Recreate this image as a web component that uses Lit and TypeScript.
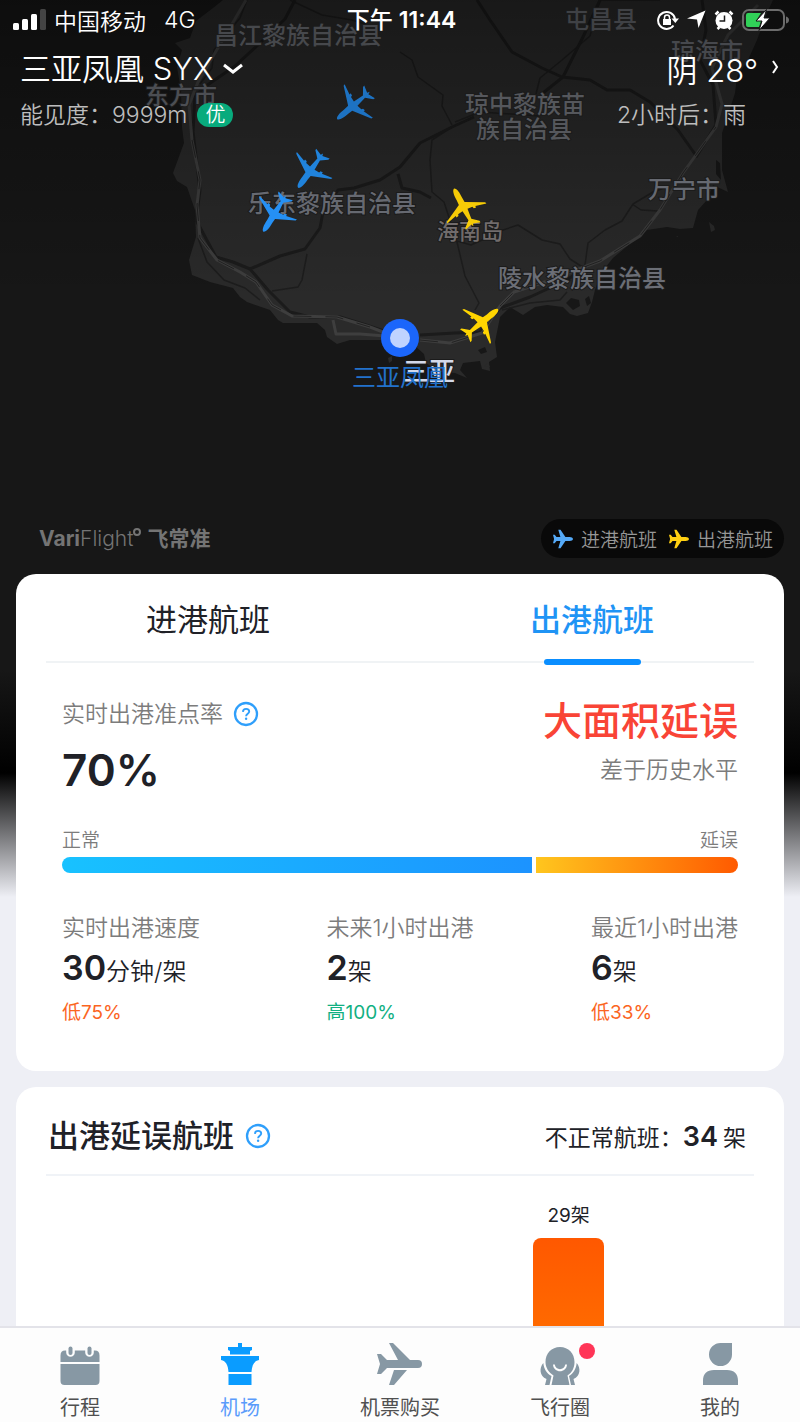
import { LitElement, html, css, svg, nothing } from "lit";
import { customElement, property, state } from "lit/decorators.js";
import { classMap } from "lit/directives/class-map.js";

const PLANE =
  "M22 0C21 2.600 16 3.200 10 3L5 3.200L-4.500 21.500L-6.200 22L-3.400 11L-5 11L-4.600 8.600L-2.800 8L-2.200 2.800L-13 1.600L-18.500 8L-20.300 8.300L-18 1L-20.500 0L-18 -1L-20.300 -8.300L-18.500 -8L-13 -1.600L-2.200 -2.800L-2.800 -8L-4.600 -8.600L-5 -11L-3.400 -11L-6.200 -22L-4.500 -21.500L5 -3.200L10 -3C16 -3.200 21 -2.600 22 0Z";

const MAP_LABELS = [
  { x: 298, y: 44, t: "昌江黎族自治县", c: "#46484c" },
  { x: 601, y: 28, t: "屯昌县", c: "#3f4145" },
  { x: 707, y: 60, t: "琼海市", c: "#46484d" },
  { x: 181, y: 104, t: "东方市", c: "#4c4e53" },
  { x: 525, y: 113, t: "琼中黎族苗", c: "#55575c" },
  { x: 524, y: 138, t: "族自治县", c: "#55575c" },
  { x: 684, y: 198, t: "万宁市", c: "#666971" },
  { x: 332, y: 212, t: "乐东黎族自治县", c: "#666971" },
  { x: 582, y: 287, t: "陵水黎族自治县", c: "#6b6e76" },
];

const PLANES = [
  { x: 354, y: 105, r: 140, c: "#1d72c2" },
  { x: 311, y: 170, r: 126, c: "#2083dc" },
  { x: 275, y: 213, r: 122, c: "#2590f4" },
  { x: 464, y: 208, r: -117, c: "#f6cb06" },
  { x: 481, y: 323, r: -39, c: "#ffd500" },
];

@customElement("airport-map")
class AirportMap extends LitElement {
  static styles = css`
    :host { display: block; min-width: 0; overflow: hidden; }
    .map { display: block; width: 100%; height: 100%; }
    .label { font: 500 24px/1 "Noto Sans CJK SC", sans-serif; text-anchor: middle; paint-order: stroke; stroke: #1b1b1b; stroke-width: 2px; }
    .island { font-size: 22px; fill: #716c6c; }
    .city { font-size: 26px; fill: #d3d9ea; }
    .here { font: 400 24px/1 "Noto Sans CJK SC", sans-serif; text-anchor: middle; fill: #2272cc; }
    .thick { fill: none; stroke: #1b1b1b; stroke-width: 3; stroke-linejoin: round; }
    .thin { fill: none; stroke: #1d1d1d; stroke-width: 1.5; stroke-linejoin: round; }
    .rail { fill: none; stroke: #3e3e3e; stroke-width: 3; stroke-linejoin: round; }
    .dash { fill: none; stroke: #222; stroke-width: 1; stroke-dasharray: 18 14; }
  `;

  render() {
    return html`<svg class="map" viewBox="0 0 800 574" preserveAspectRatio="xMidYMin slice" role="img" aria-label="海南岛航班地图">
      <defs>
        <linearGradient id="shade" x1="0" y1="0" x2="0" y2="1">
          <stop offset="0" stop-color="#000" stop-opacity=".42" />
          <stop offset="1" stop-color="#000" stop-opacity="0" />
        </linearGradient>
      </defs>
      <rect width="800" height="574" fill="#171717" />
      <path fill="#2a2a2a" d="M223 0L213 8L196 21L190 38L175 43L182 50L177 67L181 90L182 127L184 143L173 173L177 181L187 187L195 210L196 237L189 260L192 275L210 282L233 288L240 297L247 302L270 310L278 320L283 323L317 323L325 330L327 337L337 344L350 340L380 340L392 343L415 346L424 354L426 363L440 372L455 373L467 378L460 370L463 363L480 361L482 369L490 371L489 362L497 357L495 342L500 317L510 307L523 315L535 307L547 305L563 307L570 314L577 316L588 313L592 302L595 290L601 273L613 258L632 242L647 230L667 227L680 229L693 228L698 210L707 200L713 185L728 192L722 170L722 133L729 112L735 93L737 77L748 60L757 40L767 13L773 0Z" />
      <path fill="#171717" d="M566 303l5-5 8 2 1 6-7 4zM585 299l4-3 2 7-4 3zM478 350l7-3 2 5-6 2zM716 160l4 3 1 17-5-6z" />
      <path fill="#2a2a2a" d="M709 222l5 4 1 4-4 2zM388 358l4-2 0 5-3 2zM484 366l4-3 2 4zM676 236l2 0 0 1z" />
      <path class="thin" d="M247 0L240 18L226 35L214 50L212 68L200 84M400 52L412 60L418 77L443 95L442 106L452 125M660 0L600 0L590 36L562 60L540 78L536 94M452 127L432 140L430 160L432 192L444 202L457 242L465 276L479 303L475 310M457 241L471 245L482 240L500 231L518 225L542 240L560 244L570 259L584 268M585 265L588 243L605 230L622 221L633 204L653 192L664 188M632 204L641 210L658 211M307 254L302 280L298 287L272 291M198 238L207 262L224 280L245 288L260 300M290 0L322 15L352 20L378 28M567 292L560 300L530 303L502 310M455 122L480 112L540 116" />
      <path class="thick" d="M477 0L490 20L512 52L542 68L562 77L590 80L607 90L630 90L650 102L678 130L697 157M600 0L583 37L563 77L543 93M474 117L452 127L420 143L400 167L380 180L354 188L338 190L323 212L320 228L305 249L280 256L250 269M398 174L402 188L420 192L431 198M295 0L285 19L258 45L235 66L206 86L196 95M702 0L706 30L700 60L713 85L716 125L696 157M195 95L193 132L200 190L196 220L216 257L233 262L250 269L268 290L290 312L310 317L340 317L366 325L390 333M420 335L455 333L480 332L500 308L530 297L567 280L584 268" />
      <path class="rail" d="M246 0L232 24L198 82L189 105L192 140L200 180L197 205L200 238L217 260L240 272L256 282L272 305L292 316L337 317L370 327L383 332M333 320L336 334L360 334L385 336M420 340L450 343L482 333L500 306L514 292L548 281L584 267L600 261L640 236L660 210L683 173L716 127L722 104L712 68L728 35L758 5" />
      <path class="dash" d="M192 140L200 180L197 205L200 238L217 260L240 272L256 282L272 305L292 316L337 317L370 327M420 340L450 343L482 333L500 306L514 292L548 281L584 267L600 261L640 236L660 210L683 173L716 127" />
      <rect width="800" height="300" fill="url(#shade)" />
      ${MAP_LABELS.map((l) => svg`<text class="label" x=${l.x} y=${l.y} fill=${l.c}>${l.t}</text>`)}
      <text class="label island" x="470" y="239">海南岛</text>
      ${PLANES.map(
        (p) => svg`<path d=${PLANE} fill=${p.c} transform="translate(${p.x} ${p.y}) rotate(${p.r})" />`
      )}
      <circle cx="400" cy="338" r="19" fill="#1b66fb" />
      <circle cx="400" cy="338" r="10" fill="#bfd3ff" />
      <text class="label city" x="429" y="381">三亚</text>
      <text class="here" x="400" y="386">三亚凤凰</text>
    </svg>`;
  }
}

@customElement("legend-plane")
class LegendPlane extends LitElement {
  @property() color = "#fff";
  static styles = css`
    :host { display: inline-flex; }
    .icon { width: 22px; height: 22px; }
  `;
  render() {
    return html`<svg class="icon" viewBox="0 0 22 22" aria-hidden="true">
      <path fill=${this.color} d="M21 11c0 1.300-1.600 2-3.300 2h-4.300L8.500 20.300H6.300L8.400 13H4.500L2.700 15.300H1L2.100 11 1 6.700h1.700L4.500 9h3.900L6.300 1.700h2.200L13.400 9h4.300c1.700 0 3.300.7 3.300 2z" />
    </svg>`;
  }
}

@customElement("help-button")
class HelpButton extends LitElement {
  static styles = css`
    :host { display: inline-flex; }
    .btn { display: flex; padding: 0; border: 0; background: none; cursor: pointer; }
    .icon { width: 26px; height: 26px; }
  `;
  render() {
    return html`<button class="btn" aria-label="说明">
      <svg class="icon" viewBox="0 0 26 26" fill="none" stroke="#2f9ffb">
        <circle cx="13" cy="13" r="11" stroke-width="2.300" />
        <path stroke-width="1.900" d="M9.900 10.900c.1-1.900 1.400-3 3.200-3s3.100 1.100 3.100 2.600c0 2.200-3.100 2.300-3.100 4.700" />
        <circle cx="13.100" cy="17.800" r="1.200" fill="#2f9ffb" stroke="none" />
      </svg>
    </button>`;
  }
}

const STATS = [
  { label: "实时出港速度", value: "30", unit: "分钟/架", diff: "低75%", up: false },
  { label: "未来1小时出港", value: "2", unit: "架", diff: "高100%", up: true },
  { label: "最近1小时出港", value: "6", unit: "架", diff: "低33%", up: false },
];

const NAV = [
  {
    label: "行程",
    icon: svg`<path d="M3.500 12.500Q3.500 7.500 8 7.500h1.200v2a4.300 4.300 0 0 0 8.600 0v-2h10.400v2a4.300 4.300 0 0 0 8.600 0v-2H38q4.500 0 4.500 5V19h-39zM3.500 21h39v17q0 4-4 4h-31q-4 0-4-4z"/><rect x="11.500" y="3.500" width="4" height="8.500" rx="2"/><rect x="30.500" y="3.500" width="4" height="8.500" rx="2"/>`,
  },
  {
    label: "机场",
    icon: svg`<path d="M21 0h4v4h10v3l-2 1v3.500H13V8l-2-1V4h10zM4 13h38v4c-5 1-7 5-7.500 12h-23C11 22 9 18 4 17zM11.500 31h23v11h-23z"/>`,
  },
  {
    label: "机票购买",
    icon: svg`<path d="M0 11h4l6 6h11L12 0h4l17 17h8q4 0 4 4t-4 4H10l-6 6H0l3-10zM17 27h13L17 42h-5z"/>`,
  },
  {
    label: "飞行圈",
    icon: svg`<path fill-rule="evenodd" d="M23 4c8.500 0 14.500 6.500 14.500 15 0 6-2.500 10.500-7 13.500l2 9.500H14.500l2-9.500c-4.500-3-8-7.500-8-13.500C8.500 10.500 14.500 4 23 4zM17.800 21.500h-1.800c.4 9 13.600 9 14 0h-1.800c-.6 6.200-9.800 6.200-10.400 0z"/><path d="M6.300 20C2 25 2.500 33 9.500 36L8 42h4.500l2-9C9.500 30.500 7 26 6.300 20zM39.700 20c4.300 5 3.800 13-3.200 16l1.500 6h-4l-2-9c4.500-2.500 7-7 7.700-13z"/>`,
    badge: true,
  },
  {
    label: "我的",
    icon: svg`<path d="M23.500 0H35v11.500A11.500 11.500 0 1 1 23.500 0zM6 42v-4.500C6 31 10 27 17 27h13c7 0 11 4 11 10.500V42z"/>`,
  },
];

@customElement("app-root")
class AppRoot extends LitElement {
  @state() private tab = 1;
  @state() private page = 1;

  static styles = css`
    :host { display: flex; flex-direction: column; height: 100vh; font-family: Inter, "Noto Sans CJK SC", sans-serif; color: #202127; background: #eeeff5; }
    * { box-sizing: border-box; }
    .scroll { flex: 1; min-height: 0; overflow-y: auto; scrollbar-width: none; }
    .content { background: linear-gradient(#171717 0, #171717 670px, #000 773px, #eeeff5 897px); padding-bottom: 16px; }
    button { font: inherit; color: inherit; border: 0; background: none; padding: 0; cursor: pointer; }
    .hero { display: grid; grid-template: 574px / minmax(0, 1fr); }
    .layer { grid-area: 1 / 1; }
    .over { position: relative; display: flex; flex-direction: column; color: #fff; }
    .status { display: grid; grid-template-columns: 1fr auto 1fr; align-items: center; height: 40px; padding: 0 10px 1px 13px; font-size: 23px; font-weight: 350; }
    .carrier, .sysicons { display: flex; align-items: center; }
    .carrier { gap: 8px; }
    .net { margin-left: 10px; }
    .sysicons { justify-content: flex-end; gap: 8px; }
    .time { font-size: 23px; line-height: 32px; font-weight: 500; }
    .time b { font-weight: 600; }
    .info { display: flex; justify-content: space-between; padding: 7px 20px 0; font-weight: 350; }
    .title { display: flex; align-items: center; gap: 10px; font-size: 31px; line-height: 44px; font-weight: 350; }
    .sub { display: flex; align-items: center; gap: 10px; margin-top: 8px; font-size: 23px; line-height: 32px; color: #bdbdbd; }
    .tag { padding: 0 8px; border-radius: 12px; background: #08ab7d; color: #fff; font-size: 20px; line-height: 24px; }
    .weather { display: grid; grid-template-columns: auto auto; column-gap: 14px; justify-items: end; align-content: start; padding-top: 2px; }
    .later { margin: 6px 12px 0 0; }
    .mapfoot { display: flex; justify-content: space-between; align-items: center; margin-top: auto; padding: 0 16px 16px 39px; }
    .logo { display: flex; gap: 6px; align-items: center; color: #747474; font-size: 21px; font-weight: 300; line-height: 28px; }
    .logo b { font-weight: 700; }
    .ring { width: 8px; height: 8px; border: 2px solid #747474; border-radius: 50%; display: inline-block; vertical-align: 10px; }
    .legend { display: flex; align-items: center; gap: 11px; height: 39px; padding: 0 11px; border-radius: 20px; background: #090909; color: #979797; font-size: 19px; font-weight: 350; }
    .key { display: flex; align-items: center; gap: 7px; }
    .cards { display: flex; flex-direction: column; gap: 16px; padding: 0 16px; }
    .card { background: #fff; border-radius: 20px; overflow: hidden; }
    .tabs { display: grid; grid-template-columns: 1fr 1fr; position: relative; }
    .rule { height: 2px; margin: 0 30px; background: #f0f3f5; }
    .tab { display: flex; flex-direction: column; align-items: center; height: 87px; padding-top: 24px; font-size: 31px; line-height: 44px; }
    .tab.on { color: #1f94f5; font-weight: 500; }
    .tabbar { width: 97px; height: 6px; margin: 17px 0 -4px; border-radius: 3px; background: #0a8eff; position: relative; }
    .body { padding: 32px 46px 44px; }
    .summary { display: flex; justify-content: space-between; }
    .muted { color: #7c7c7c; font-size: 23px; line-height: 32px; font-weight: 350; }
    .rate { display: flex; align-items: center; gap: 10px; padding-top: 3px; }
    .percent { margin-top: 12px; font-size: 44px; line-height: 56px; font-weight: 600; }
    .right { text-align: right; }
    .alert { color: #f94436; font-size: 39px; line-height: 52px; font-weight: 500; margin-bottom: 7px; }
    .ends { display: flex; justify-content: space-between; margin-top: 31px; color: #7c7c7c; font-size: 19px; line-height: 24px; font-weight: 350; }
    .meter { display: flex; gap: 4px; height: 16px; margin-top: 4px; border-radius: 8px; overflow: hidden; }
    .ok { background: linear-gradient(90deg, #18c2ff, #1c93ff); }
    .late { background: linear-gradient(90deg, #ffc61e, #ff5a00); }
    .stats { display: grid; grid-template-columns: 1fr 1fr auto; margin-top: 39px; }
    .value { display: flex; align-items: baseline; height: 40px; margin-top: 4px; font-size: 24px; line-height: 40px; font-weight: 350; }
    .value b { font-size: 34px; font-weight: 600; }
    .diff { margin-top: 11px; font-size: 19px; line-height: 28px; color: #fb651f; }
    .diff.up { color: #11b082; }
    .head { display: flex; justify-content: space-between; align-items: center; margin: 0 30px; padding: 27px 8px 16px 2px; border-bottom: 2px solid #f0f3f7; }
    h2 { display: flex; align-items: center; gap: 11px; margin: 0; font-size: 31px; line-height: 44px; font-weight: 500; }
    .total { padding-top: 2px; font-size: 23px; line-height: 32px; }
    .total b { margin-right: 5px; font-size: 27px; font-weight: 600; }
    .chart { display: grid; grid-template-columns: 13fr 71px 4fr; margin: 0 30px; padding-top: 28px; }
    .column { grid-column: 2; display: flex; flex-direction: column; align-items: center; gap: 10px; font-size: 19px; line-height: 24px; }
    .bar { width: 100%; border-radius: 8px 8px 0 0; background: linear-gradient(#ff5800, #ff7a00); }
    .nav { display: grid; grid-template-columns: repeat(5, 1fr); height: 96px; border-top: 2px solid #e3e3e9; background: #fdfdfd; }
    .item { display: flex; flex-direction: column; align-items: center; gap: 9px; padding-top: 15px; color: #505050; font-size: 20px; line-height: 28px; text-decoration: none; }
    .item.on { color: #5a9bfb; }
    .ico { position: relative; display: flex; color: #8798a4; }
    .item.on .ico { color: #0a9cff; }
    .ico svg { width: 46px; height: 42px; fill: currentColor; }
    .dot { position: absolute; top: 0; right: -12px; width: 16px; height: 16px; border-radius: 50%; background: #ff3557; }
  `;

  private statusBar() {
    return html`<div class="status">
      <div class="carrier">
        <svg width="33" height="22" viewBox="0 0 33 22" fill="#fff" aria-hidden="true">
          <rect y="14" width="6" height="7" rx="1.500" /><rect x="9" y="10" width="6" height="11" rx="1.500" />
          <rect x="18" y="5" width="6" height="16" rx="1.500" /><rect x="27" y="0" width="6" height="21" rx="1.500" fill="#444" />
        </svg>
        <span>中国移动</span><span class="net">4G</span>
      </div>
      <span class="time">下午 <b>11:44</b></span>
      <div class="sysicons">
        <svg width="22" height="20" viewBox="0 0 22 20" aria-hidden="true">
          <path fill="none" stroke="#fff" stroke-width="2" d="M16.500 15.500A8.500 8.500 0 1 1 18 9" />
          <path fill="#fff" d="M14.500 8.500H22L18.300 13zM6 9h8v6H6z" />
          <path fill="none" stroke="#fff" stroke-width="1.500" d="M7.500 9.500V7.500a2.500 2.500 0 0 1 5 0v2" />
        </svg>
        <svg width="19" height="19" viewBox="0 0 19 19" fill="#fff" aria-hidden="true"><path d="M18.500.500L11.500 18 10 9.500 0 8.500z" /></svg>
        <svg width="20" height="20" viewBox="0 0 20 20" aria-hidden="true">
          <circle cx="10" cy="10.500" r="8.500" fill="#fff" />
          <path fill="none" stroke="#fff" stroke-width="2.500" d="M1.500 4.500l3-3M18.500 4.500l-3-3M3.500 19l2-2M16.500 19l-2-2" />
          <path fill="none" stroke="#1a1a1a" stroke-width="1.500" d="M10.500 5.500v5.500h-5" />
        </svg>
        <svg width="48" height="24" viewBox="0 0 48 24" aria-hidden="true">
          <rect x="1" y="2" width="41" height="20" rx="6" fill="none" stroke="#6b6b6b" stroke-width="2" />
          <path fill="#6b6b6b" d="M44 8.500q3 1 3 3.500t-3 3.500z" />
          <path fill="#31d158" d="M6 5h13l-5 8h5l-2 6H6q-2 0-2-2V7q0-2 2-2z" />
          <path fill="#fff" stroke="#141414" d="M24.500 1.500L14 13h6l-3 9.500L28 10h-6z" />
        </svg>
      </div>
    </div>`;
  }

  render() {
    return html`
      <div class="scroll">
        <main class="content">
          <section class="hero">
            <airport-map class="layer"></airport-map>
            <div class="layer over">
              ${this.statusBar()}
              <div class="info">
                <div>
                  <button class="title">三亚凤凰 SYX
                    <svg width="20" height="12" viewBox="0 0 20 12" fill="none" stroke="#fff" stroke-width="3" aria-hidden="true"><path d="M1 2l9 7 9-7" /></svg>
                  </button>
                  <div class="sub"><span>能见度：9999m</span><span class="tag">优</span></div>
                </div>
                <div class="weather">
                  <span class="title">阴 28°</span>
                  <svg width="8" height="44" viewBox="0 0 8 44" fill="none" stroke="#fff" stroke-width="2" aria-hidden="true"><path d="M1 12l4 6-4 6" /></svg>
                  <span class="sub later">2小时后：雨</span>
                </div>
              </div>
              <div class="mapfoot">
                <div class="logo"><span><b>Vari</b>Flight<i class="ring"></i></span><b>飞常准</b></div>
                <div class="legend">
                  <span class="key"><legend-plane color="#55aaf8"></legend-plane>进港航班</span>
                  <span class="key"><legend-plane color="#ffd012"></legend-plane>出港航班</span>
                </div>
              </div>
            </div>
          </section>
          <div class="cards">
            <section class="card">
              <div class="tabs" role="tablist">
                ${["进港航班", "出港航班"].map(
                  (t, i) => html`<button role="tab" aria-selected=${this.tab === i} class=${classMap({ tab: true, on: this.tab === i })} @click=${() => (this.tab = i)}>
                    ${t}${this.tab === i ? html`<span class="tabbar"></span>` : nothing}
                  </button>`
                )}
              </div>
              <div class="rule"></div>
              <div class="body">
                <div class="summary">
                  <div>
                    <div class="rate muted">实时出港准点率<help-button></help-button></div>
                    <div class="percent">70%</div>
                  </div>
                  <div class="right">
                    <div class="alert">大面积延误</div>
                    <div class="muted">差于历史水平</div>
                  </div>
                </div>
                <div class="ends"><span>正常</span><span>延误</span></div>
                <div class="meter"><span class="ok" style="flex:${70}"></span><span class="late" style="flex:${30}"></span></div>
                <div class="stats">
                  ${STATS.map(
                    (s) => html`<div>
                      <div class="muted">${s.label}</div>
                      <div class="value"><b>${s.value}</b>${s.unit}</div>
                      <div class=${classMap({ diff: true, up: s.up })}>${s.diff}</div>
                    </div>`
                  )}
                </div>
              </div>
            </section>
            <section class="card">
              <header class="head">
                <h2>出港延误航班<help-button></help-button></h2>
                <div class="total">不正常航班：<b>34</b>架</div>
              </header>
              <div class="chart">
                <div class="column"><span>29架</span><span class="bar" style="height:${29 * 6}px"></span></div>
              </div>
            </section>
          </div>
        </main>
      </div>
      <nav class="nav">
        ${NAV.map(
          (n, i) => html`<a href="#" class=${classMap({ item: true, on: this.page === i })} @click=${(e: Event) => { e.preventDefault(); this.page = i; }}>
            <span class="ico"><svg viewBox="0 0 46 42" aria-hidden="true">${n.icon}</svg>${n.badge ? html`<span class="dot"></span>` : nothing}</span>
            ${n.label}
          </a>`
        )}
      </nav>
    `;
  }
}
